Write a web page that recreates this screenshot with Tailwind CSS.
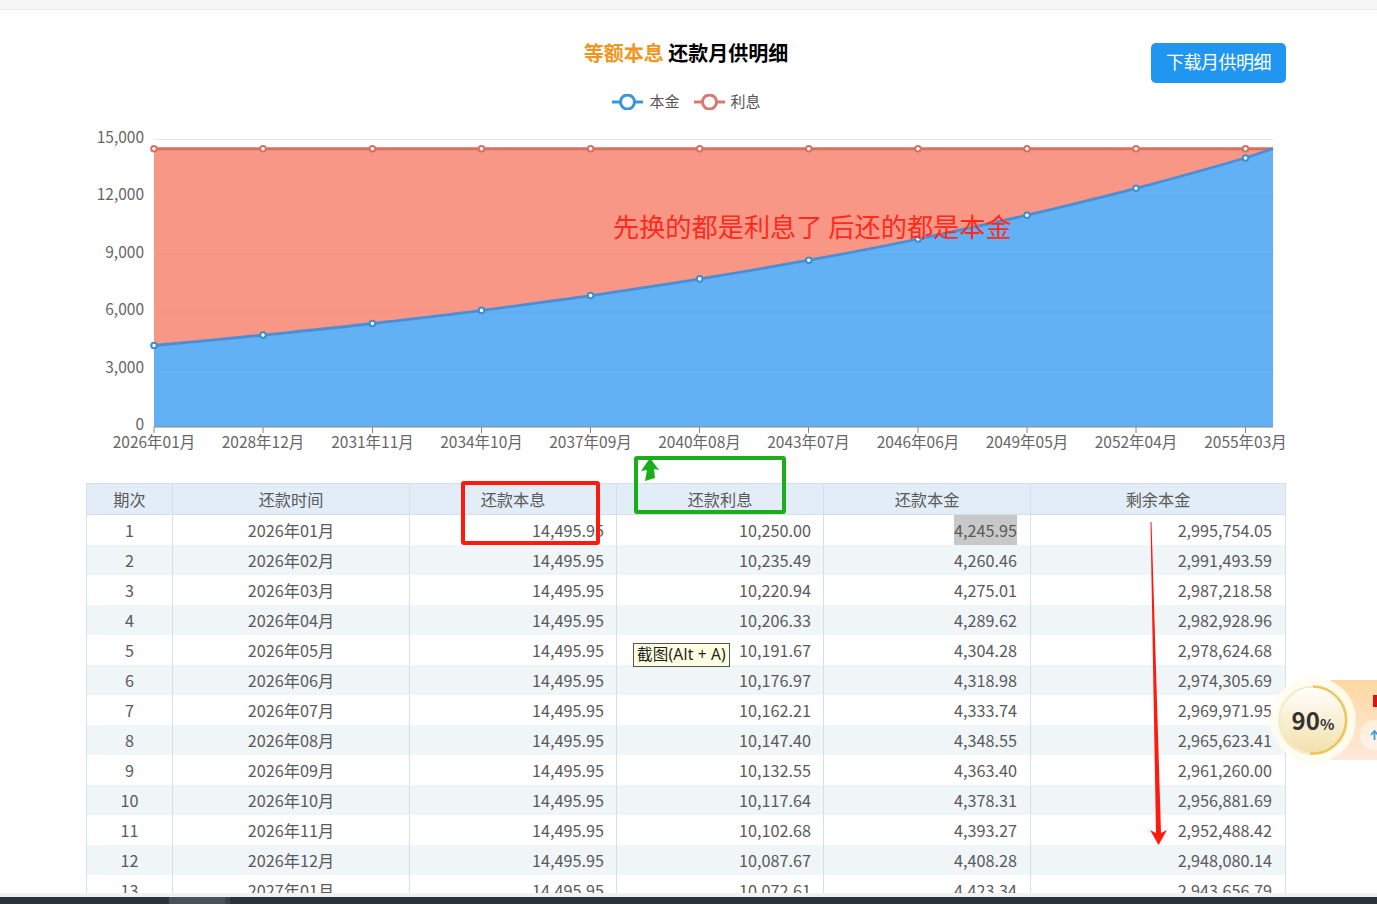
<!DOCTYPE html>
<html lang="zh-CN">
<head>
  <meta charset="utf-8"/>
  <title>等额本息 还款月供明细</title>
  <script src="https://cdn.jsdelivr.net/npm/@tailwindcss/browser@4"></script>
</head>
<body class="relative w-[1377px] h-[904px] overflow-hidden bg-white font-['Noto_Sans_CJK_SC','Noto_Sans',sans-serif] text-[#555]">

  <!-- top strip -->
  <div class="h-[10px] bg-[#f6f6f6] border-b border-[#e6e6e6]"></div>

  <main class="h-[883px] overflow-hidden">
    <!-- title + download -->
    <div class="mx-[86px] w-[1200px] grid grid-cols-[135px_1fr_135px] pt-[33px] h-[73px]">
      <div></div>
      <h1 class="text-center text-[20px] leading-[22px] font-bold text-black -mt-[1px]"><span class="text-[#f0961e]">等额本息</span> 还款月供明细</h1>
      <a href="#" class="h-[40px] pb-[4px] rounded-[5px] bg-[#2196f0] text-white text-[18px] tracking-[-0.5px] flex items-center justify-center">下载月供明细</a>
    </div>

    <!-- legend -->
    <div class="h-[37px] flex items-center justify-center gap-[14px] pr-[4px] text-[15px] text-[#555]">
      <div class="flex items-center gap-[6px]">
        <svg width="31" height="16" viewBox="0 0 31 16"><path d="M0 8h31" stroke="#3a96d6" stroke-width="3"/><circle cx="15.5" cy="8" r="7" fill="#fff" stroke="#3a96d6" stroke-width="3"/></svg>
        <span>本金</span>
      </div>
      <div class="flex items-center gap-[6px]">
        <svg width="31" height="16" viewBox="0 0 31 16"><path d="M0 8h31" stroke="#d9786c" stroke-width="3"/><circle cx="15.5" cy="8" r="7" fill="#fff" stroke="#d9786c" stroke-width="3"/></svg>
        <span>利息</span>
      </div>
    </div>

    <!-- chart, viewBox uses page coordinates -->
    <svg class="block" width="1377" height="363" viewBox="0 120 1377 363" font-size="15.5" fill="#666">
      <path d="M154 139.5H1273" stroke="#e4e4e4"/>
      <path d="M154 148.7H1273V427H154Z" fill="#f99787"/>
      <path d="M154 345.5C190 342 227 338.8 263 335.1S336 327.8 372.4 323.5S445 315.4 481.5 310.4S554 301 590.6 295.6S663 285 699.7 278.9S772 267 808.8 260.2S881 247 918 239S990 224 1027 215.2S1099 198 1136 188.3S1209 168.5 1245.5 158L1273 148.7V427H154Z" fill="#62b1f5"/>
      <g stroke="#000" stroke-opacity=".04">
        <path d="M154 197H1273M154 254.500H1273M154 312H1273M154 369.500H1273"/>
      </g>
      <path d="M154 148.700H1273" stroke="#d9705f" stroke-width="3"/>
      <path d="M154 345.500C190 342 227 338.800 263 335.100S336 327.800 372.400 323.500S445 315.400 481.500 310.400S554 301 590.600 295.600S663 285 699.700 278.900S772 267 808.800 260.200S881 247 918 239S990 224 1027 215.200S1099 198 1136 188.300S1209 168.500 1245.500 158L1273 148.700" fill="none" stroke="#4a8fd6" stroke-width="2.800"/>
      <path d="M154 427H1273" stroke="#888"/>
      <path d="M154 427v6M263 427v6M372.500 427v6M481.500 427v6M590.500 427v6M699.500 427v6M808.500 427v6M918 427v6M1027 427v6M1136 427v6M1245.500 427v6" stroke="#888"/>

      <g fill="#fff" stroke="#d9705f" stroke-width="2">
        <circle cx="154" cy="148.700" r="2.800"/><circle cx="263" cy="148.700" r="2.800"/><circle cx="372.400" cy="148.700" r="2.800"/><circle cx="481.500" cy="148.700" r="2.800"/><circle cx="590.600" cy="148.700" r="2.800"/><circle cx="699.700" cy="148.700" r="2.800"/><circle cx="808.800" cy="148.700" r="2.800"/><circle cx="918" cy="148.700" r="2.800"/><circle cx="1027" cy="148.700" r="2.800"/><circle cx="1136" cy="148.700" r="2.800"/><circle cx="1245.500" cy="148.700" r="2.800"/>
      </g>
      <g fill="#fff" stroke="#3a8fd0" stroke-width="2">
        <circle cx="154" cy="345.500" r="2.800"/><circle cx="263" cy="335.100" r="2.800"/><circle cx="372.400" cy="323.500" r="2.800"/><circle cx="481.500" cy="310.400" r="2.800"/><circle cx="590.600" cy="295.600" r="2.800"/><circle cx="699.700" cy="278.900" r="2.800"/><circle cx="808.800" cy="260.200" r="2.800"/><circle cx="918" cy="239" r="2.800"/><circle cx="1027" cy="215.200" r="2.800"/><circle cx="1136" cy="188.300" r="2.800"/><circle cx="1245.500" cy="158" r="2.800"/>
      </g>

      <g text-anchor="end">
        <text x="144" y="143">15,000</text>
        <text x="144" y="200">12,000</text>
        <text x="144" y="258">9,000</text>
        <text x="144" y="315">6,000</text>
        <text x="144" y="373">3,000</text>
        <text x="144" y="430">0</text>
      </g>
      <g text-anchor="middle">
        <text x="154" y="448">2026年01月</text>
        <text x="263" y="448">2028年12月</text>
        <text x="372.500" y="448">2031年11月</text>
        <text x="481.500" y="448">2034年10月</text>
        <text x="590.500" y="448">2037年09月</text>
        <text x="699.500" y="448">2040年08月</text>
        <text x="808.500" y="448">2043年07月</text>
        <text x="918" y="448">2046年06月</text>
        <text x="1027" y="448">2049年05月</text>
        <text x="1136" y="448">2052年04月</text>
        <text x="1245.500" y="448">2055年03月</text>
      </g>
    </svg>

    <!-- repayment table -->
    <table class="ml-[86px] w-[1199px] table-fixed border-collapse text-[16.2px] text-[#5a5a5a]">
      <colgroup>
        <col class="w-[86px]"/><col class="w-[237px]"/><col class="w-[207px]"/><col class="w-[207px]"/><col class="w-[207px]"/><col class="w-[255px]"/>
      </colgroup>
      <thead>
        <tr class="h-[31px] bg-[#e3edf7] font-normal">
          <th class="font-normal border border-[#d3e0ec] p-0">期次</th>
          <th class="font-normal border border-[#d3e0ec] p-0">还款时间</th>
          <th class="font-normal border border-[#d3e0ec] p-0">还款本息</th>
          <th class="font-normal border border-[#d3e0ec] p-0">还款利息</th>
          <th class="font-normal border border-[#d3e0ec] p-0">还款本金</th>
          <th class="font-normal border border-[#d3e0ec] p-0">剩余本金</th>
        </tr>
      </thead>
      <tbody id="rows"></tbody>
    </table>
  </main>

  <!-- bottom taskbar edge -->
  <div class="absolute left-0 right-0 bottom-0 h-[11px] bg-[#f1f1f1]">
    <div class="mt-[4px] h-[7px] bg-[#2a323a] flex">
      <div class="ml-[169px] w-[56px] bg-[#4b5159]"></div>
      <div class="w-[5px] bg-[#3b4249]"></div>
    </div>
  </div>

  <!-- annotations drawn over the page -->
  <div class="absolute left-[613px] top-[208px] text-[26.2px] leading-[36px] text-[#ff2a1c] whitespace-pre">先换的都是利息了 后还的都是本金</div>
  <div class="absolute left-[461px] top-[481px] w-[139px] h-[64px] border-[4px] border-[#ff1a0e] rounded-[3px]"></div>
  <div class="absolute left-[634px] top-[456px] w-[152px] h-[58px] border-[4px] border-[#1aaf1a] rounded-[3px]"></div>
  <svg class="absolute left-0 top-0 pointer-events-none" width="1377" height="904">
    <polygon points="650,458 659,470 654,469 655,478 645,481 647,470 641,471" fill="#1aaf1a"/>
    <polygon points="1150.500,522 1151.500,522 1161,833 1167,830 1158.500,845 1150,830 1156,833" fill="#ff1a0e"/>
  </svg>
  <div class="absolute left-[633px] top-[643px] w-[97px] h-[24px] bg-[#ffffe1] border border-[#555] font-['Noto_Sans','Noto_Sans_CJK_SC',sans-serif] text-[15.5px] tracking-[0.2px] leading-[21px] text-[#222] text-center whitespace-nowrap">截图(Alt + A)</div>

  <!-- floating speed widget -->
  <div class="absolute left-[1330px] top-[680px] w-[47px] h-[80px] bg-gradient-to-b from-[#ffd8a0] to-[#ffe9dc]">
    <span class="absolute left-[43px] top-[15px] w-[6px] h-[12px] bg-[#e01010]"></span>
    <span class="absolute left-[30px] top-[40px] w-[30px] h-[30px] rounded-full bg-white/45 flex items-center justify-center">
      <svg class="-ml-[2px]" width="9" height="10" viewBox="0 0 9 10"><path d="M4.500 10V2M1 5l3.500-4L8 5" fill="none" stroke="#3f9be0" stroke-width="1.800"/></svg>
    </span>
  </div>
  <div class="absolute left-[1270px] top-[677px] w-[86px] h-[86px] rounded-full bg-[#fffdf0]/90 flex items-center justify-center">
    <div class="w-[70px] h-[70px] rounded-full bg-gradient-to-b from-white to-[#f3dfa8] relative flex items-center justify-center text-[#333] font-bold">
      <svg class="absolute left-0 top-0" width="70" height="70" viewBox="0 0 70 70"><circle cx="35" cy="35" r="33.500" fill="none" stroke="#f3ecc8" stroke-width="2"/><path d="M35 1.500A33.500 33.500 0 1 1 32 68.400" fill="none" stroke="#ecc65a" stroke-width="2.500"/></svg>
      <span class="relative text-[24px] leading-none">90<span class="text-[15px] font-semibold">%</span></span>
    </div>
  </div>

  <script>
    const data = [
      ['1','2026年01月','14,495.95','10,250.00','4,245.95','2,995,754.05'],
      ['2','2026年02月','14,495.95','10,235.49','4,260.46','2,991,493.59'],
      ['3','2026年03月','14,495.95','10,220.94','4,275.01','2,987,218.58'],
      ['4','2026年04月','14,495.95','10,206.33','4,289.62','2,982,928.96'],
      ['5','2026年05月','14,495.95','10,191.67','4,304.28','2,978,624.68'],
      ['6','2026年06月','14,495.95','10,176.97','4,318.98','2,974,305.69'],
      ['7','2026年07月','14,495.95','10,162.21','4,333.74','2,969,971.95'],
      ['8','2026年08月','14,495.95','10,147.40','4,348.55','2,965,623.41'],
      ['9','2026年09月','14,495.95','10,132.55','4,363.40','2,961,260.00'],
      ['10','2026年10月','14,495.95','10,117.64','4,378.31','2,956,881.69'],
      ['11','2026年11月','14,495.95','10,102.68','4,393.27','2,952,488.42'],
      ['12','2026年12月','14,495.95','10,087.67','4,408.28','2,948,080.14'],
      ['13','2027年01月','14,495.95','10,072.61','4,423.34','2,943,656.79'],
    ];
    const cell = 'border-x border-[#d3e0ec] p-0';
    document.getElementById('rows').innerHTML = data.map((r, i) => `
      <tr class="h-[30px] even:bg-[#f0f5f8]">
        <td class="${cell} text-center">${r[0]}</td>
        <td class="${cell} text-center">${r[1]}</td>
        <td class="${cell} text-right pr-[12px]">${r[2]}</td>
        <td class="${cell} text-right pr-[12px]">${r[3]}</td>
        <td class="${cell} text-right pr-[13px]">${i === 0 ? `<span class="inline-block bg-[#c8c8c8] leading-[30px]">${r[4]}</span>` : r[4]}</td>
        <td class="${cell} text-right pr-[13px]">${r[5]}</td>
      </tr>`).join('');
  </script>
</body>
</html>
